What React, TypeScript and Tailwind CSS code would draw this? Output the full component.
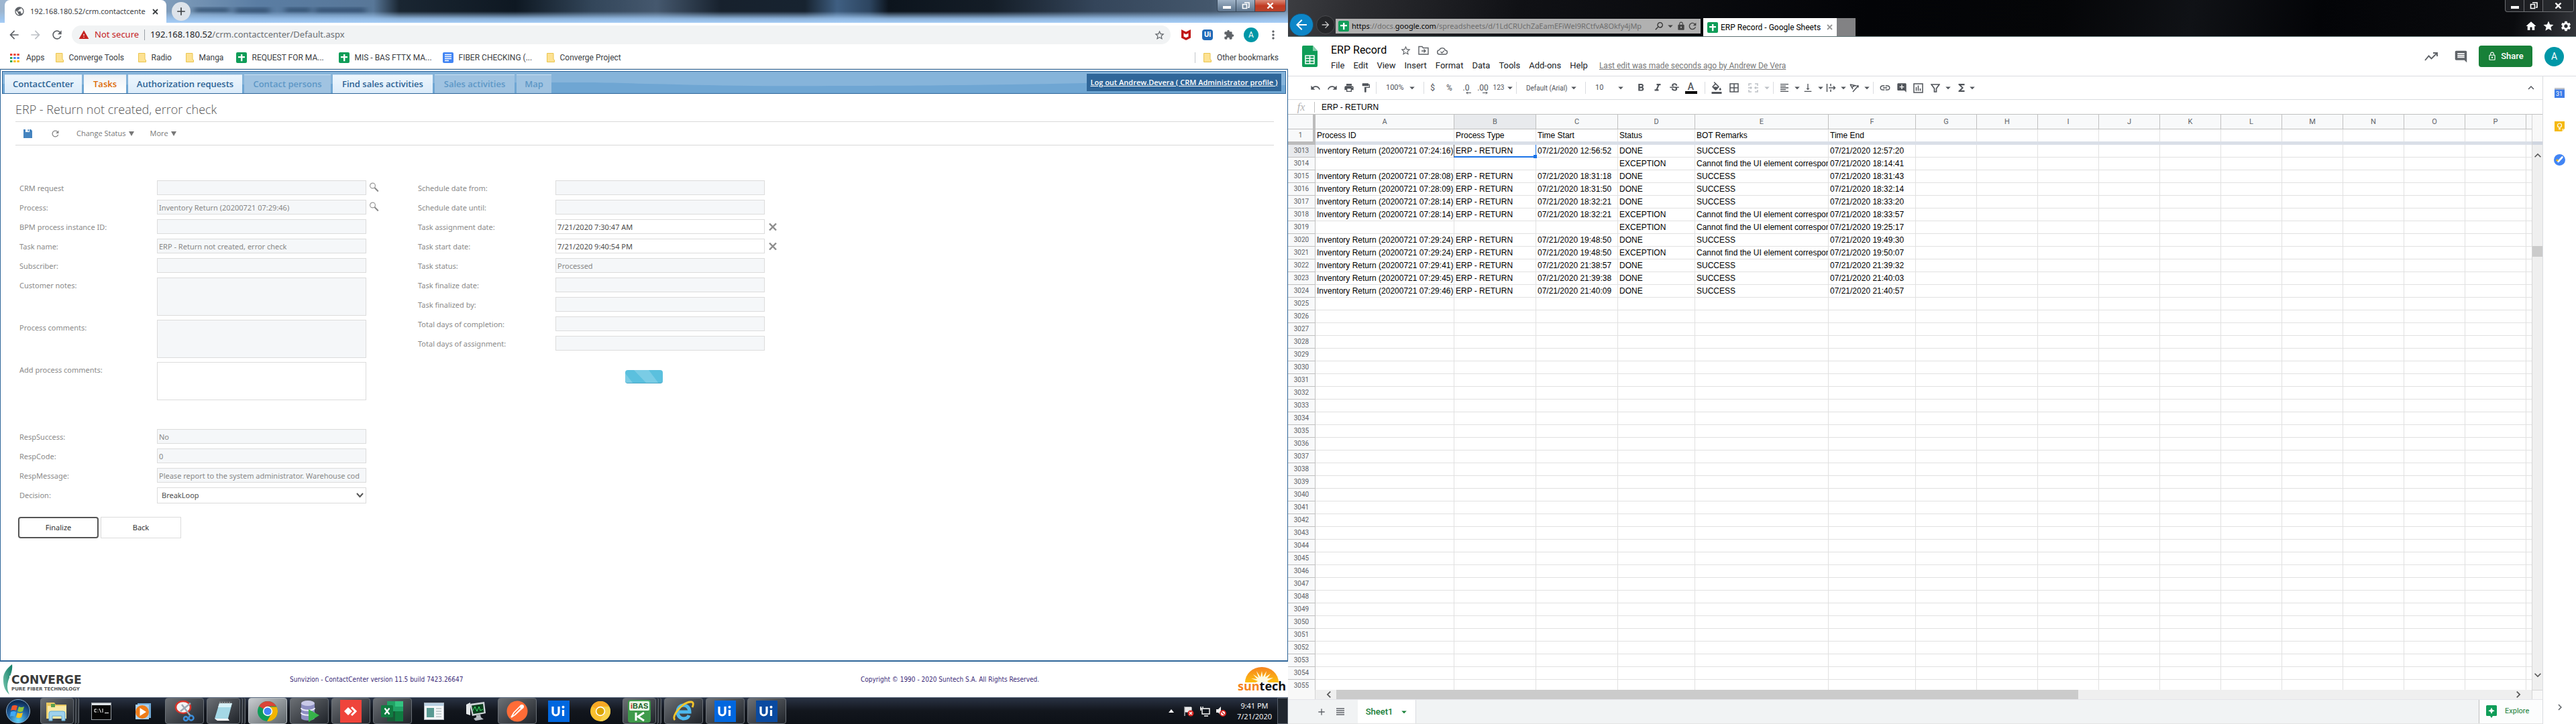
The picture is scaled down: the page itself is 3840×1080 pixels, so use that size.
import type { ReactNode } from "react";
import {
  MdAdd, MdAddComment, MdArrowBack, MdArrowDropDown, MdArrowForward, MdBorderAll, MdChevronRight,
  MdComment, MdExtension, MdFormatAlignLeft, MdFormatBold, MdFormatColorFill, MdFormatItalic, MdFormatPaint,
  MdFunctions, MdHome, MdInsertLink, MdKeyboardArrowDown, MdKeyboardArrowLeft, MdKeyboardArrowRight,
  MdKeyboardArrowUp, MdLock, MdLockOutline, MdMoreVert, MdPrint, MdPublic, MdRedo, MdRefresh, MdSearch,
  MdSettings, MdStar, MdStarBorder, MdStrikethroughS, MdUndo, MdVerticalAlignBottom, MdWarning,
} from "react-icons/md";

/* ---------- shared icons ---------- */

function SheetsFavicon() {
  return (
    <svg width="16" height="16" viewBox="0 0 16 16" className="shrink-0" aria-hidden="true">
      <rect width="16" height="16" rx="2" fill="#0f9d58" />
      <path d="M7 3h2.4v3H13v2.2H9.400v5H7v-5H3V6h4z" fill="#fff" />
    </svg>
  );
}

function DocsFavicon() {
  return (
    <svg width="16" height="16" viewBox="0 0 16 16" className="shrink-0" aria-hidden="true">
      <rect width="16" height="16" rx="2" fill="#4285f4" />
      <path d="M3 3.500h10M3 6.500h10M3 9.500h10M3 12.500h6" stroke="#fff" strokeWidth="1.500" />
    </svg>
  );
}

function Folder() {
  return (
    <svg width="12" height="14" viewBox="0 0 12 14" className="shrink-0" aria-hidden="true">
      <path d="M.5.5h9.500v9l1.500 1v3H.5z" fill="#fde293" stroke="#eac54f" />
    </svg>
  );
}

function Search() {
  return (
    <svg width="15" height="15" viewBox="0 0 15 15" aria-hidden="true">
      <circle cx="5.500" cy="5" r="3.900" fill="none" stroke="#999" strokeWidth="1.200" />
      <path d="M8.400 8l5.400 5.500" stroke="#888" strokeWidth="2" />
    </svg>
  );
}

function WindowButtons({ dark }: { dark?: boolean }) {
  const frame = dark ? "border-[#6c6e72] bg-[#1d1e22]" : "border-[#39495b] bg-gradient-to-b from-[#9fb2c6] to-[#5d748c]";
  const close = dark ? "bg-[#26282c]" : "bg-gradient-to-b from-[#d98a78] via-[#c23a22] to-[#b5432c]";
  return (
    <div className={`flex h-[18px] w-[103px] overflow-hidden rounded-b border border-t-0 ${frame}`}>
      <button aria-label="Minimize" className="flex w-7 items-end justify-center border-r border-inherit pb-1">
        <span className="h-1 w-3 bg-white" />
      </button>
      <button aria-label="Restore" className="flex w-7 items-center justify-center border-r border-inherit">
        <svg width="12" height="11" viewBox="0 0 12 11"><path d="M4 1h7v7H9M1.500 3.500h6v6h-6z" fill="none" stroke="#fff" strokeWidth="1.600" /></svg>
      </button>
      <button aria-label="Close" className={`flex flex-1 items-center justify-center ${close}`}>
        <svg width="11" height="9" viewBox="0 0 11 9"><path d="M1.500.5l8 8M9.500.5l-8 8" stroke="#fff" strokeWidth="2.400" /></svg>
      </button>
    </div>
  );
}

/* ---------- left: contact center ---------- */

const bookmarks: { label: string; icon: ReactNode; cls: string }[] = [
  { label: "Converge Tools", icon: <Folder />, cls: "w-[102px]" },
  { label: "Radio", icon: <Folder />, cls: "w-[50px]" },
  { label: "Manga", icon: <Folder />, cls: "w-[54px]" },
  { label: "REQUEST FOR MA...", icon: <SheetsFavicon />, cls: "w-[132px]" },
  { label: "MIS - BAS FTTX MA...", icon: <SheetsFavicon />, cls: "w-[134px]" },
  { label: "FIBER CHECKING (...", icon: <DocsFavicon />, cls: "w-[134px]" },
  { label: "Converge Project", icon: <Folder />, cls: "w-[120px]" },
];

function GlassTitle() {
  return (
    <svg className="absolute inset-0 h-full w-full" viewBox="0 0 1920 34" preserveAspectRatio="none" aria-hidden="true">
      <defs>
        <linearGradient id="glassX" x1="0" x2="1" y1="0" y2="0">
          <stop offset="0" stopColor="#9db6d0" />
          <stop offset=".13" stopColor="#7f9cba" />
          <stop offset=".2" stopColor="#5a7da3" />
          <stop offset=".29" stopColor="#587798" />
          <stop offset=".31" stopColor="#1a2632" />
          <stop offset=".4" stopColor="#0e1822" />
          <stop offset=".46" stopColor="#33465a" />
          <stop offset=".51" stopColor="#45586e" />
          <stop offset=".56" stopColor="#17212d" />
          <stop offset=".625" stopColor="#172330" />
          <stop offset=".65" stopColor="#3f5f82" />
          <stop offset=".675" stopColor="#2d4560" />
          <stop offset=".69" stopColor="#0c141d" />
          <stop offset=".77" stopColor="#141d27" />
          <stop offset=".85" stopColor="#34455a" />
          <stop offset=".94" stopColor="#44576c" />
          <stop offset="1" stopColor="#7992ab" />
        </linearGradient>
        <linearGradient id="glassY" x1="0" x2="0" y1="0" y2="1">
          <stop offset=".5" stopColor="#a3c9f0" stopOpacity="0" />
          <stop offset=".82" stopColor="#9cc4ee" stopOpacity=".9" />
          <stop offset="1" stopColor="#a6cdf6" />
        </linearGradient>
        <filter id="glassBlur"><feGaussianBlur stdDeviation="5 2" /></filter>
      </defs>
      <rect width="1920" height="34" fill="url(#glassX)" />
      <g fill="#33506f" opacity=".75" filter="url(#glassBlur)">
        <rect x="290" y="11" width="52" height="8" />
        <rect x="350" y="11" width="52" height="10" />
        <rect x="425" y="11" width="38" height="8" />
        <rect x="470" y="11" width="75" height="9" />
      </g>
      <rect width="1920" height="34" fill="url(#glassY)" />
    </svg>
  );
}

function ChromeBars() {
  return (
    <header className="font-[Roboto,sans-serif] text-xs text-[#3c4043]">
      <div className="relative flex h-[34px] items-start">
        <GlassTitle />
        <div className="relative ml-[7px] flex h-full w-[241px] items-center rounded-t-lg bg-white pl-3.5 pr-3">
          <MdPublic className="mr-2 size-4 shrink-0 text-[#5f6368]" />
          <span className="flex-1 whitespace-nowrap font-['Noto_Sans',sans-serif] text-[11px]">192.168.180.52/crm.contactcente</span>
          <button aria-label="Close tab" className="ml-2 text-[#3c4043]">
            <svg width="9" height="9" viewBox="0 0 9 9"><path d="M1 1l7 7M8 1L1 8" stroke="currentColor" strokeWidth="1.800" /></svg>
          </button>
        </div>
        <button aria-label="New tab" className="relative ml-2 mt-[3px] flex size-7 items-center justify-center rounded-full bg-[#dde3ea] text-[#3c4043]">
          <MdAdd className="size-5" />
        </button>
        <div className="relative ml-auto mr-[3px]"><WindowButtons /></div>
      </div>
      <div className="flex h-9 items-center bg-white pr-3">
        <button aria-label="Back" className="ml-[11px] text-[#5f6368]"><MdArrowBack className="size-5" /></button>
        <button aria-label="Forward" className="ml-3 text-[#bdc1c6]"><MdArrowForward className="size-5" /></button>
        <button aria-label="Reload" className="ml-3 text-[#5f6368]"><MdRefresh className="size-5" /></button>
        <div className="ml-3 flex h-7 flex-1 items-center rounded-full bg-[#f1f3f4] pl-2.5 pr-2 text-[13px]">
          <MdWarning className="size-4 text-[#c5221f]" />
          <span className="ml-2 font-['Noto_Sans',sans-serif] text-[#c5221f]">Not secure</span>
          <span className="mx-2 h-4 w-px bg-[#9aa0a6]" />
          <span className="font-['Noto_Sans',sans-serif] text-[#6b6f73]"><span className="text-[#202124]">192.168.180.52</span>/crm.contactcenter/Default.aspx</span>
          <button aria-label="Bookmark this page" className="ml-auto"><MdStarBorder className="size-[17px] text-[#5f6368]" /></button>
        </div>
        <button aria-label="McAfee" className="ml-4">
          <svg width="14" height="16" viewBox="0 0 14 16"><path d="M0 0l7 3.500L14 0v12.500L7 16l-7-3.500z" fill="#c01818" /><path d="M3.500 5.500L7 7.200l3.500-1.700v5L7 12.300l-3.500-1.800z" fill="#fff" /></svg>
        </button>
        <button aria-label="UiPath" className="ml-[17px] size-4 rounded-sm bg-[#1f6ab8] text-[11px] font-bold leading-4 text-white">Ui</button>
        <button aria-label="Extensions" className="ml-4 text-[#5f6368]"><MdExtension className="size-4" /></button>
        <button aria-label="Profile" className="ml-3.5 size-[22px] rounded-full bg-[#0097a7] text-xs text-white">A</button>
        <button aria-label="Menu" className="ml-3 text-[#5f6368]"><MdMoreVert className="size-5" /></button>
      </div>
      <nav className="flex h-[33px] items-center border-b border-[#d8dadd] bg-white pl-[15px] pr-3.5" aria-label="Bookmarks">
        <a href="#apps" className="flex items-center gap-2.5">
          <svg width="14" height="13" viewBox="0 0 14 13">
            {["#ea4335", "#ea4335", "#ea4335", "#34a853", "#4285f4", "#4285f4", "#34a853", "#fbbc04", "#fbbc04"].map((c, i) => (
              <rect key={i} x={(i % 3) * 5.2} y={Math.floor(i / 3) * 5} width="3.400" height="3" fill={c} />
            ))}
          </svg>
          Apps
        </a>
        <div className="ml-4 flex gap-[21px]">
          {bookmarks.map((b) => (
            <a key={b.label} href="#bookmark" className={`flex items-center gap-2 whitespace-nowrap ${b.cls}`}>{b.icon}{b.label}</a>
          ))}
        </div>
        <a href="#other" className="ml-auto flex h-4 items-center gap-2 border-l border-[#c4c7cb] pl-3"><Folder />Other bookmarks</a>
      </nav>
    </header>
  );
}

const navTabs: { label: string; kind: "on" | "active" | "off"; cls: string }[] = [
  { label: "ContactCenter", kind: "on", cls: "w-[115px]" },
  { label: "Tasks", kind: "active", cls: "w-[63px]" },
  { label: "Authorization requests", kind: "on", cls: "w-[170px]" },
  { label: "Contact persons", kind: "off", cls: "w-[129px]" },
  { label: "Find sales activities", kind: "on", cls: "w-[149px]" },
  { label: "Sales activities", kind: "off", cls: "w-[119px]" },
  { label: "Map", kind: "off", cls: "w-[52px]" },
];

const tabStyle = {
  on: "bg-gradient-to-b from-[#edf6fd] to-[#dcecfa] text-[#2c6394]",
  active: "bg-gradient-to-b from-[#eef3f7] to-white text-[#dd6a05]",
  off: "bg-[#a0c3e1] text-[#5d97c6]",
};

function AppNav() {
  return (
    <div className="relative flex h-[34px] items-end border border-[#2f6699] bg-[#6fa6d3]">
      <svg className="absolute inset-0 h-full w-full" viewBox="0 0 1914 32" preserveAspectRatio="none" aria-hidden="true">
        <path d="M0 0H1914V20C1800 22 1700 16 1660 16C1500 20 1350 21 1250 21C1130 22 1050 20 960 18C900 16 860 16 830 16C600 16 300 22 0 18z" fill="#86b4da" />
      </svg>
      <nav className="relative ml-[3px] flex items-end gap-[3px] font-['Open_Sans',sans-serif] text-[13px] font-semibold" aria-label="Modules">
        {navTabs.map((t) => (
          <a key={t.label} href="#module" className={`flex h-7 items-center justify-center whitespace-nowrap border-t border-[#c9dff1] ${t.cls} ${tabStyle[t.kind]}`}>{t.label}</a>
        ))}
      </nav>
      <a href="#logout" className="relative mb-[3px] ml-auto mr-1.5 flex h-[26px] w-[290px] items-center justify-center whitespace-nowrap bg-[#2f6699] font-['Open_Sans',sans-serif] text-[11px] font-semibold text-white underline">
        Log out Andrew.Devera ( CRM Administrator profile )
      </a>
    </div>
  );
}

type FieldSpec = { label: string; value?: string; editable?: boolean; area?: boolean; tool?: "search" | "clear" };

function Field({ f }: { f: FieldSpec }) {
  const id = f.label.toLowerCase().replace(/[^a-z]+/g, "-");
  const box = `w-[312px] border border-[#dcdcdc] px-0.5 ${f.editable ? "bg-white text-[#4d4d4d]" : "bg-[#f5f7f9] text-[#878787]"}`;
  return (
    <div className={`flex items-start ${f.area ? "h-[63px]" : "h-[29px]"}`}>
      <label htmlFor={id} className="w-[205px] leading-6">{f.label}</label>
      {f.area ? (
        <textarea id={id} readOnly={!f.editable} className={`${box} h-[57px] resize-none`} />
      ) : (
        <input id={id} readOnly={!f.editable} defaultValue={f.value} className={`${box} h-[22px]`} />
      )}
      {f.tool === "search" && <button aria-label={`Find ${f.label}`} className="ml-1 mt-[3px]"><Search /></button>}
      {f.tool === "clear" && (
        <button aria-label={`Clear ${f.label}`} className="ml-1.5 mt-1.5">
          <svg width="12" height="11" viewBox="0 0 12 11"><path d="M1 .5l10 10M11 .5L1 10.500" stroke="#8c8c8c" strokeWidth="2.400" /></svg>
        </button>
      )}
    </div>
  );
}

const leftFields: FieldSpec[] = [
  { label: "CRM request", tool: "search" },
  { label: "Process:", value: "Inventory Return (20200721 07:29:46)", tool: "search" },
  { label: "BPM process instance ID:" },
  { label: "Task name:", value: "ERP - Return not created, error check" },
  { label: "Subscriber:" },
  { label: "Customer notes:", area: true },
  { label: "Process comments:", area: true },
  { label: "Add process comments:", area: true, editable: true },
];

const responseFields: FieldSpec[] = [
  { label: "RespSuccess:", value: "No" },
  { label: "RespCode:", value: "0" },
  { label: "RespMessage:", value: "Please report to the system administrator. Warehouse cod" },
];

const rightFields: FieldSpec[] = [
  { label: "Schedule date from:" },
  { label: "Schedule date until:" },
  { label: "Task assignment date:", value: "7/21/2020 7:30:47 AM", editable: true, tool: "clear" },
  { label: "Task start date:", value: "7/21/2020 9:40:54 PM", editable: true, tool: "clear" },
  { label: "Task status:", value: "Processed" },
  { label: "Task finalize date:" },
  { label: "Task finalized by:" },
  { label: "Total days of completion:" },
  { label: "Total days of assignment:" },
];

function TaskForm() {
  return (
    <form className="flex pl-[26px] pt-[52px] font-['Noto_Sans',sans-serif] text-[11px] text-[#8a8a8a]">
      <div className="w-[594px]">
        {leftFields.map((f) => <Field key={f.label} f={f} />)}
        <div className="mt-[37px]">
          {responseFields.map((f) => <Field key={f.label} f={f} />)}
          <div className="flex h-11 items-start">
            <label htmlFor="decision" className="w-[205px] leading-6">Decision:</label>
            <div className="relative w-[312px]">
              <select id="decision" className="h-6 w-full appearance-none border border-[#dcdcdc] bg-white px-1.5 text-[#4d4d4d]" defaultValue="BreakLoop">
                <option>BreakLoop</option>
              </select>
              <svg className="pointer-events-none absolute right-1 top-2" width="11" height="8" viewBox="0 0 11 8"><path d="M1 1l4.500 5L10 1" fill="none" stroke="#555" strokeWidth="2" /></svg>
            </div>
          </div>
        </div>
        <div className="-ml-0.5 flex gap-[3px] text-[11px] text-[#333]">
          <button type="button" className="h-8 w-[120px] rounded-sm border-2 border-[#555]">Finalize</button>
          <button type="button" className="h-8 w-[120px] border border-[#dcdcdc]">Back</button>
        </div>
      </div>
      <div>
        {rightFields.map((f) => <Field key={f.label} f={f} />)}
        <div role="status" aria-label="Loading" className="ml-[309px] mt-[22px] h-5 w-14 overflow-hidden rounded-sm border-b border-[#4aa5c4] bg-[#5bc0de]">
          <svg width="56" height="20" viewBox="0 0 56 20" aria-hidden="true">
            <path d="M0 5L12 20H0zM13 0H35L50 20H32zM55 0h1v2z" fill="#7acce5" />
          </svg>
        </div>
      </div>
    </form>
  );
}

function ConvergeLogo() {
  return (
    <svg width="132" height="48" viewBox="0 0 132 48" role="img" aria-label="Converge Pure Fiber Technology">
      <defs><linearGradient id="leaf" x1="0" x2="1" y1="1" y2="0"><stop offset="0" stopColor="#7cc9b0" /><stop offset="1" stopColor="#0c7a63" /></linearGradient></defs>
      <path d="M14 1C5 8 0 16 1 25C1 34 4 41 10 46C6 38 6 30 10 21C13 14 15 8 14 1z" fill="url(#leaf)" />
      <path d="M10 18h8v22h-8z" fill="#fff" />
      <text x="13" y="30" fontFamily="DejaVu Sans" fontWeight="bold" fontSize="17" fill="#3a3a3a">CONVERGE</text>
      <text x="13" y="40" fontFamily="DejaVu Sans" fontWeight="bold" fontSize="7" fill="#555">PURE FIBER TECHNOLOGY</text>
    </svg>
  );
}

function SuntechLogo() {
  return (
    <svg width="76" height="40" viewBox="0 0 76 40" role="img" aria-label="suntech">
      <defs>
        <linearGradient id="sun" x1="0" x2="0" y1="0" y2="1"><stop offset="0" stopColor="#f6831f" /><stop offset="1" stopColor="#fdc010" /></linearGradient>
      </defs>
      <path d="M12 24a24 22 0 0 1 50 0z" fill="url(#sun)" />
      <path d="M37 7l1.500 9L44 7l-2 9 8-5-5 7 9-1-9 5 2 2H28l3-2-10-4 9 1-6-7 8 5-3-10 6 9z" fill="#fff9e0" />
      <text x="1" y="36" fontFamily="Open Sans" fontWeight="bold" fontSize="18" fill="#f58220">sun<tspan fill="#111">tech</tspan></text>
    </svg>
  );
}

/* ---------- taskbar ---------- */

function UiTile({ color }: { color: string }) {
  return (
    <svg width="32" height="32" viewBox="0 0 32 32" aria-hidden="true">
      <rect width="32" height="32" fill={color} />
      <path d="M7 9v8.500a4.500 4.500 0 0 0 9 0V9M22.500 14v9" fill="none" stroke="#fff" strokeWidth="3.200" />
      <circle cx="22.500" cy="9.800" r="2" fill="#fff" />
    </svg>
  );
}

function ChromeDisc({ a, b, c, core }: { a: string; b: string; c: string; core: string }) {
  return (
    <svg width="32" height="32" viewBox="0 0 32 32" aria-hidden="true">
      <circle cx="16" cy="16" r="15" fill={b} />
      <path d="M16 16L3 8.500A15 15 0 0 1 29 8.500H16z" fill={a} />
      <path d="M29.500 9.500A15 15 0 0 1 15 31l7.500-13L20 9.500z" fill={c} />
      <circle cx="16" cy="16" r="7.200" fill="#fff" />
      <circle cx="16" cy="16" r="5.600" fill={core} />
    </svg>
  );
}

const art: Record<string, ReactNode> = {
  explorer: (
    <svg width="34" height="32" viewBox="0 0 34 32">
      <path d="M1 3h12l2 3h16v21H1z" fill="#e9c75f" /><path d="M3 8h28v19H3z" fill="#fbe9a4" /><path d="M8 5h6v5H8z" fill="#5aa04e" />
      <path d="M5 30V19q0-3 3-3h18q3 0 3 3v11h-5v-7H10v7z" fill="#9fd2ee" stroke="#5fa9d3" />
    </svg>
  ),
  cmd: (
    <svg width="30" height="26" viewBox="0 0 30 26">
      <rect x=".5" y=".5" width="29" height="25" fill="#050505" stroke="#9aa0a6" /><path d="M1 1h28v3H1z" fill="#dfe3e8" />
      <path d="M8 10H5v4h3M10 10.500v1M10 13.500v1M12 9l2.500 6M17 9v6M20 15.500h6" stroke="#fff" fill="none" />
    </svg>
  ),
  player: (
    <svg width="28" height="28" viewBox="0 0 28 28">
      <path d="M6 2h20v22H6z" fill="#6fa9d8" /><path d="M3 4h20v22H3z" fill="#a8d1f0" /><circle cx="13" cy="15" r="10" fill="#ef7d1a" /><path d="M9.500 9v12L19 15z" fill="#fff" />
    </svg>
  ),
  snip: (
    <svg width="32" height="32" viewBox="0 0 32 32">
      <ellipse cx="14" cy="10" rx="11" ry="9" fill="#f4f4f4" stroke="#d8332a" strokeWidth="2.500" />
      <path d="M10 16L25 4M12 6l13 17" stroke="#9fa8b3" strokeWidth="2.500" /><circle cx="26" cy="26" r="3.500" fill="none" stroke="#3b8edb" strokeWidth="2.500" /><circle cx="18" cy="27" r="3" fill="none" stroke="#3b8edb" strokeWidth="2.500" />
    </svg>
  ),
  notepad: (
    <svg width="32" height="32" viewBox="0 0 32 32">
      <path d="M10 4h19l-6 23H3z" fill="#a4d8e6" /><path d="M10 4h19l-2 6H8z" fill="#d8f1f7" /><path d="M10 3h18" stroke="#888" strokeWidth="2.500" strokeDasharray="2 1.500" /><path d="M3 27l20 0 2 3H7z" fill="#fff" />
    </svg>
  ),
  chrome: <ChromeDisc a="#db4437" b="#0f9d58" c="#f4b400" core="#4285f4" />,
  db: (
    <svg width="34" height="34" viewBox="0 0 34 34">
      <path d="M5 5v22c0 5 20 5 20 0V5" fill="#8d8fc2" /><ellipse cx="15" cy="5" rx="10" ry="4" fill="#c9cae8" />
      <path d="M5 12c0 5 20 5 20 0M5 19c0 5 20 5 20 0" stroke="#e9e9f7" fill="none" strokeWidth="2" /><path d="M16 14l16 9-16 10z" fill="#37b34a" />
    </svg>
  ),
  anydesk: (
    <svg width="32" height="34" viewBox="0 0 32 34">
      <rect width="32" height="34" fill="#ef443b" /><path d="M12 11l6 6-6 6-6-6z" fill="#fff" /><path d="M17 11l6 6-6 6" fill="none" stroke="#fff" strokeWidth="3" />
    </svg>
  ),
  excel: (
    <svg width="34" height="32" viewBox="0 0 34 32">
      <path d="M9 1h24v30H9z" fill="#21a366" /><path d="M21 1h12v8H21z" fill="#33c481" /><path d="M9 16h12v15H9z" fill="#185c37" /><path d="M21 16h12v15H21z" fill="#107c41" /><rect y="7" width="18" height="18" rx="1.500" fill="#107c41" />
      <path d="M5.500 11.500l7 9M12.500 11.500l-7 9" stroke="#fff" strokeWidth="2.200" />
    </svg>
  ),
  app: (
    <svg width="30" height="26" viewBox="0 0 30 26">
      <rect x=".5" y=".5" width="29" height="25" fill="#f4f6f8" stroke="#a9b1ba" /><path d="M1 1h28v4H1z" fill="#b8cfe2" /><path d="M4 8h11v14H4z" fill="#5a9a93" /><path d="M18 9h8M18 13h8M18 17h8M18 21h8" stroke="#9aa" />
    </svg>
  ),
  monitor: (
    <svg width="32" height="32" viewBox="0 0 32 32">
      <path d="M2 6l6-3v19l-6-2z" fill="#e3e6e8" /><path d="M7 5l22-3 2 17-20 4z" fill="#cfd4d8" /><path d="M10 7.500l17-2.500 1.500 12.500L12.500 20z" fill="#0b3d1c" />
      <path d="M12 15l3-6 3 7 3-7 2 6 4-2" stroke="#3fe06b" fill="none" /><path d="M17 22l6-1 1 4 4 3-12 2-3-3 4-2z" fill="#b4bac0" />
    </svg>
  ),
  postman: (
    <svg width="32" height="32" viewBox="0 0 32 32">
      <circle cx="16" cy="16" r="15.500" fill="#ff6c37" /><path d="M7 25l4-7L21 8l3 3-11 10z" fill="none" stroke="#fff" strokeWidth="1.700" /><path d="M13 20l9-9" stroke="#fff" /><circle cx="23" cy="9" r="3" fill="#fff" />
    </svg>
  ),
  uiBlue: <UiTile color="#0067df" />,
  uiDark: <UiTile color="#0a4aa0" />,
  canary: <ChromeDisc a="#f9a825" b="#fbc02d" c="#f9d24b" core="#dba400" />,
  ibas: (
    <svg width="34" height="34" viewBox="0 0 34 34">
      <rect width="34" height="34" rx="4" fill="#3f9a4b" /><rect x="2" y="2" width="30" height="14" rx="2" fill="#e8f6e4" />
      <text x="4" y="13" fontFamily="Liberation Sans" fontWeight="bold" fontSize="11" fill="#1d5f2b"><tspan fill="#c92a2a">i</tspan>BAS</text>
      <path d="M12 19v12M24 19l-9 6 9 6" stroke="#fff" strokeWidth="3" fill="none" />
    </svg>
  ),
  ie: (
    <svg width="34" height="34" viewBox="0 0 34 34">
      <path d="M8 18h18c0-6-4-10-9-10s-9 4-9 10 4 10 9 10c4 0 7-2 8-5" fill="none" stroke="#4db8ee" strokeWidth="5" />
      <path d="M4 30C-2 24 16 3 28 3c4 0 4 4 2 8" fill="none" stroke="#f6c62c" strokeWidth="2.800" />
    </svg>
  ),
};

const taskItems: { name: string; icon: string; open?: boolean; bright?: boolean; stack?: boolean }[] = [
  { name: "File Explorer", icon: "explorer", open: true, stack: true },
  { name: "Command Prompt", icon: "cmd" },
  { name: "Media Player", icon: "player" },
  { name: "Snipping Tool", icon: "snip", open: true },
  { name: "Notepad", icon: "notepad", open: true, stack: true },
  { name: "Chrome", icon: "chrome", open: true, bright: true },
  { name: "SQL Client", icon: "db", open: true },
  { name: "AnyDesk", icon: "anydesk", open: true },
  { name: "Excel", icon: "excel", open: true },
  { name: "Window App", icon: "app" },
  { name: "Resource Monitor", icon: "monitor" },
  { name: "Postman", icon: "postman", open: true },
  { name: "UiPath Assistant", icon: "uiBlue" },
  { name: "Chrome Canary", icon: "canary" },
  { name: "iBAS", icon: "ibas", open: true, stack: true },
  { name: "Internet Explorer", icon: "ie", open: true },
  { name: "UiPath", icon: "uiBlue", open: true },
  { name: "UiPath Studio", icon: "uiDark", open: true },
];

function Taskbar() {
  return (
    <footer className="flex h-10 items-stretch border-t border-[#5d6b80] bg-gradient-to-b from-[#2a3344] via-[#12161d] to-[#0d1117] text-white">
      <button aria-label="Start" className="flex w-[60px] items-center pl-2">
        <svg width="38" height="38" viewBox="0 0 38 38">
          <defs><radialGradient id="orb" cx=".5" cy=".9" r=".8"><stop offset="0" stopColor="#5fd0f5" /><stop offset=".6" stopColor="#1f5f9f" /><stop offset="1" stopColor="#0d2d55" /></radialGradient></defs>
          <circle cx="19" cy="19" r="17.500" fill="url(#orb)" stroke="#8fb3d0" />
          <path d="M10 11q4-2 8 0l-2 7q-4-2-8 0z" fill="#f0562b" /><path d="M20 12q4 2 8 0l-2 7q-4 2-8 0z" fill="#8cc63f" />
          <path d="M8 20q4-2 8 0l-2 7q-4-2-7 0z" fill="#3fa9f5" /><path d="M18 21q4 2 8 0l-2 7q-4 2-8 0z" fill="#fcc21b" />
        </svg>
      </button>
      <div className="flex gap-1">
        {taskItems.map((t) => (
          <button key={t.name} aria-label={t.name} className="flex w-[58px] items-stretch gap-px">
            <span
              className={`flex flex-1 items-center justify-center rounded-sm border ${
                t.bright ? "border-[#b9bfc4] bg-gradient-to-br from-[#c9cdd0] to-[#5d6469]" : t.open ? "border-[#6a7077] bg-gradient-to-br from-[#6c7075] to-[#20242a]" : "border-transparent"
              }`}
            >
              {art[t.icon]}
            </span>
            {t.stack && <span className="w-[3px] rounded-r-sm border-r border-[#6a7077] bg-[#30353b]" />}
            {t.stack && <span className="w-[3px] rounded-r-sm border-r border-[#6a7077] bg-[#30353b]" />}
          </button>
        ))}
      </div>
      <div className="ml-auto flex items-center font-['Open_Sans',sans-serif] text-[11px]">
        <svg width="8" height="5" viewBox="0 0 8 5"><path d="M0 5l4-5 4 5z" fill="#fff" /></svg>
        <svg className="ml-3.5" width="16" height="16" viewBox="0 0 16 16"><path d="M2 1v14M3 2h9v7H3z" stroke="#fff" fill="#e8e8e8" /><circle cx="11" cy="11" r="4.500" fill="#d8231f" /><path d="M9 9l4 4M13 9l-4 4" stroke="#fff" strokeWidth="1.300" /></svg>
        <svg className="ml-2" width="16" height="16" viewBox="0 0 16 16"><path d="M4 4h11v8H4zM7 15h6M2 1v6M5 1v2M1 4h4" stroke="#fff" fill="none" strokeWidth="1.400" /></svg>
        <svg className="ml-2" width="16" height="16" viewBox="0 0 16 16"><path d="M1 5h3l4-4v13l-4-4H1z" fill="#eee" /><circle cx="11" cy="11" r="4" fill="#fff" stroke="#d8231f" strokeWidth="1.800" /><path d="M8.500 8.500l5 5" stroke="#d8231f" strokeWidth="1.500" /></svg>
        <div className="ml-4 text-center leading-4"><div>9:41 PM</div><div>7/21/2020</div></div>
        <span className="ml-2 h-full w-4 border border-[#59616c] bg-[#20262e]" />
      </div>
    </footer>
  );
}

function ContactCenter() {
  return (
    <section className="flex min-w-0 flex-col bg-white">
      <ChromeBars />
      <main className="flex flex-1 flex-col border border-b-2 border-[#2f6699] px-0.5 pt-0.5 font-['Open_Sans',sans-serif]">
        <AppNav />
        <div className="pl-5 pr-[18px]">
          <h1 className="flex h-[42px] items-center border-b border-[#d9d9d9] pt-1 text-lg font-light text-[#555]">ERP - Return not created, error check</h1>
          <div className="flex h-[35px] items-center border-b border-[#d9d9d9] pl-3 text-[11px] text-[#777]">
            <button aria-label="Save">
              <svg width="13" height="13" viewBox="0 0 13 13"><path d="M0 0h3v4h6V0h2l2 2v11H0z" fill="#4584bf" /><path d="M6.500 0H8v3H6.500z" fill="#4584bf" /></svg>
            </button>
            <button aria-label="Refresh" className="ml-[27px]"><MdRefresh className="size-[15px] text-[#888]" /></button>
            <button className="ml-6 flex items-center gap-1">Change Status <svg width="8" height="7" viewBox="0 0 8 7"><path d="M0 0h8L4 7z" fill="#777" /></svg></button>
            <button className="ml-6 flex items-center gap-1">More <svg width="8" height="7" viewBox="0 0 8 7"><path d="M0 0h8L4 7z" fill="#777" /></svg></button>
          </div>
        </div>
        <TaskForm />
      </main>
      <div className="flex h-[53px] items-center font-['DejaVu_Sans_Condensed','DejaVu_Sans',sans-serif] text-[10px] text-[#3b2a78]">
        <div className="w-[432px] pl-1"><ConvergeLogo /></div>
        <span className="w-[851px]">Sunvizion - ContactCenter version 11.5 build 7423.26647</span>
        <span>Copyright © 1990 - 2020 Suntech S.A. All Rights Reserved.</span>
        <div className="ml-auto"><SuntechLogo /></div>
      </div>
      <Taskbar />
    </section>
  );
}

/* ---------- right: spreadsheet ---------- */

function BrowserBar() {
  return (
    <header className="flex h-[55px] flex-col border-b border-[#5c7273] bg-[linear-gradient(100deg,#3c3d41_0%,#2c2d31_5%,#101115_18%,#030407_45%,#050608_60%,#101216_70%,#030407_80%,#0a0b0e_95%,#33353a_100%)]">
      <div className="mr-[3px] flex h-5 items-start justify-end"><WindowButtons dark /></div>
      <div className="flex flex-1 items-end">
        <button aria-label="Back" className="ml-0.5 flex h-[34px] w-9 items-center justify-center rounded-full border border-[#1c4f6e] bg-[#0d86c8] text-white"><MdArrowBack className="size-6" /></button>
        <button aria-label="Forward" className="mb-[3px] ml-1 flex size-7 items-center justify-center rounded-full border border-[#4a4b4e] bg-[#252629] text-[#c9c9c9]"><MdArrowForward className="size-4" /></button>
        <div className="mb-1 ml-px flex h-[22px] w-[544px] items-center bg-[#b1b1b1] pl-1 pr-1 text-[#6d6d6d]">
          <SheetsFavicon />
          <span className="ml-1 flex-1 whitespace-nowrap font-['Noto_Sans',sans-serif] text-[11px]"><span className="text-black">https</span>://docs.<span className="text-black">google.com</span>/spreadsheets/d/1LdCRUchZaEamEFiWel9RCtfvA8Okfy4jMp</span>
          <button aria-label="Search" className="text-[#333]"><MdSearch className="size-4 -scale-x-100" /></button>
          <button aria-label="Address history" className="text-[#444]"><MdArrowDropDown className="size-[18px]" /></button>
          <MdLock className="size-3.5 text-[#444]" />
          <button aria-label="Reload" className="ml-0.5 text-[#444]"><MdRefresh className="size-4" /></button>
        </div>
        <div className="ml-1 flex h-[27px] w-[199px] items-center bg-white px-1.5 font-[Roboto,sans-serif] text-xs text-black">
          <SheetsFavicon />
          <span className="ml-1 flex-1 whitespace-nowrap">ERP Record - Google Sheets</span>
          <button aria-label="Close tab"><svg width="9" height="9" viewBox="0 0 9 9"><path d="M1 1l7 7M8 1L1 8" stroke="#999" strokeWidth="1.800" /></svg></button>
        </div>
        <button aria-label="New tab" className="h-[27px] w-7 bg-[#828284]" />
        <div className="mb-1.5 ml-auto mr-1.5 flex gap-2 text-white">
          <button aria-label="Home"><MdHome className="size-[18px]" /></button>
          <button aria-label="Favorites"><MdStar className="size-[18px]" /></button>
          <button aria-label="Settings"><MdSettings className="size-[18px]" /></button>
        </div>
      </div>
    </header>
  );
}

const menus = ["File", "Edit", "View", "Insert", "Format", "Data", "Tools", "Add-ons", "Help"];

function SheetHeader() {
  return (
    <div className="flex h-[58px] items-start pl-[21px] pr-[18px] pt-[11px] font-[Roboto,sans-serif]">
      <svg width="23" height="34" viewBox="0 0 23 34" className="mt-0.5 shrink-0" aria-hidden="true">
        <path d="M2 0h14l7 8v22a2 2 0 0 1-2 2H2a2 2 0 0 1-2-2V2a2 2 0 0 1 2-2z" fill="#0f9d58" /><path d="M16 0l7 8h-7z" fill="#87ceac" />
        <path d="M5 15h13v12H5zM5 19h13M5 23h13M11.500 15v12" fill="none" stroke="#fff" strokeWidth="1.500" />
      </svg>
      <div className="ml-5">
        <div className="flex h-[18px] items-center text-base text-black">
          <h2>ERP Record</h2>
          <button aria-label="Star" className="ml-5 text-[#5f6368]"><MdStarBorder className="size-[17px]" /></button>
          <button aria-label="Move" className="ml-2.5">
            <svg width="16" height="14" viewBox="0 0 16 14"><path d="M1 1.500h5l1.500 2H15V13H1z" fill="none" stroke="#5f6368" strokeWidth="1.400" /><path d="M5 8h5.500M8.500 5.500L11 8l-2.500 2.500" fill="none" stroke="#5f6368" strokeWidth="1.400" /></svg>
          </button>
          <button aria-label="Saved to cloud" className="ml-3">
            <svg width="16" height="13" viewBox="0 0 16 13"><path d="M4 12a3.200 3.200 0 0 1-.3-6.400A4.500 4.500 0 0 1 12.300 6 3 3 0 0 1 12.500 12z" fill="none" stroke="#5f6368" strokeWidth="1.400" /><path d="M5.500 8l2 2 3.200-3.400" fill="none" stroke="#5f6368" strokeWidth="1.300" /></svg>
          </button>
        </div>
        <div className="mt-1 flex h-5 items-center gap-[13px] whitespace-nowrap text-[13px] text-[#202124]">
          {menus.map((m) => <button key={m}>{m}</button>)}
          <a href="#history" className="ml-1 text-xs text-[#777] underline">Last edit was made seconds ago by Andrew De Vera</a>
        </div>
      </div>
      <div className="ml-auto mt-0.5 flex h-8 items-center text-[#5f6368]">
        <button aria-label="Activity">
          <svg width="20" height="13" viewBox="0 0 20 13"><path d="M1 12l5.500-6.500 4 4L18 2M13 1h6v5" fill="none" stroke="currentColor" strokeWidth="1.900" /></svg>
        </button>
        <button aria-label="Comments" className="ml-6"><MdComment className="size-[21px]" /></button>
        <button className="ml-4 flex h-8 w-20 items-center justify-center gap-1.5 rounded bg-[#188038] text-[13px] font-medium text-white"><MdLockOutline className="size-3.5" />Share</button>
        <button aria-label="Account" className="ml-[18px] size-[29px] rounded-full bg-[#0097a7] text-sm text-white">A</button>
      </div>
    </div>
  );
}

function Tool({ label, children, cls = "w-[25px]" }: { label: string; children: ReactNode; cls?: string }) {
  return <button aria-label={label} className={`flex items-center justify-center ${cls}`}>{children}</button>;
}

const caret = <MdArrowDropDown className="-mx-1 size-[18px] shrink-0" />;

function SheetToolbar() {
  const g = "flex h-[18px] items-center border-r border-[#dadce0]";
  return (
    <div className="flex h-[35px] items-center border-b border-[#dadce0] pl-7 font-[Roboto,sans-serif] text-[10px] text-[#50545a]" role="toolbar">
      <div className={`${g} w-[104px]`}>
        <Tool label="Undo"><MdUndo className="size-4" /></Tool>
        <Tool label="Redo"><MdRedo className="size-4" /></Tool>
        <Tool label="Print"><MdPrint className="size-4" /></Tool>
        <Tool label="Paint format"><MdFormatPaint className="size-4" /></Tool>
      </div>
      <button className={`${g} w-[71px] justify-between pl-3.5 pr-3 text-[11px]`}>100%{caret}</button>
      <div className={`${g} w-[138px] text-xs`}>
        <Tool label="Currency">$</Tool>
        <Tool label="Percent">%</Tool>
        <Tool label="Decrease decimals"><span className="relative">.0<svg className="absolute -bottom-0.5 left-1" width="8" height="5" viewBox="0 0 8 5"><path d="M8 2.500H1M3 .5l-2 2 2 2" fill="none" stroke="currentColor" /></svg></span></Tool>
        <Tool label="Increase decimals"><span className="relative">.00<svg className="absolute -bottom-0.5 left-2" width="8" height="5" viewBox="0 0 8 5"><path d="M0 2.500h7M5 .5l2 2-2 2" fill="none" stroke="currentColor" /></svg></span></Tool>
        <button className="flex w-9 items-center justify-center gap-1 text-[10px]">123{caret}</button>
      </div>
      <button className={`${g} w-[103px] justify-between pl-3.5 pr-3`}>Default (Arial){caret}</button>
      <div className={`${g} w-[178px]`}>
        <button className="flex w-[69px] items-center justify-between pl-3.5 pr-3 text-[11px]">10{caret}</button>
        <Tool label="Bold"><MdFormatBold className="size-[18px]" /></Tool>
        <Tool label="Italic"><MdFormatItalic className="size-[18px]" /></Tool>
        <Tool label="Strikethrough"><MdStrikethroughS className="size-[18px]" /></Tool>
        <Tool label="Text color"><span className="flex h-[18px] w-[18px] flex-col items-center justify-between text-sm font-medium leading-[14px]">A<span className="h-1 w-[18px] shrink-0 bg-black" /></span></Tool>
      </div>
      <div className={`${g} w-[102px] pl-1`}>
        <Tool label="Fill color"><MdFormatColorFill className="size-[18px]" /></Tool>
        <Tool label="Borders" cls="w-7"><MdBorderAll className="size-[18px]" /></Tool>
        <Tool label="Merge cells" cls="w-7 text-[#bdc1c6]">
          <svg width="15" height="14" viewBox="0 0 15 14"><path d="M5 1H1v3M10 1h4v3M5 13H1v-3M10 13h4v-3M0 7h5M15 7h-5M3.500 5.500L5 7 3.500 8.500M11.500 5.500L10 7l1.500 1.500" fill="none" stroke="currentColor" strokeWidth="1.500" /></svg>
        </Tool>
        <Tool label="Merge options" cls="w-3.5 text-[#bdc1c6]">{caret}</Tool>
      </div>
      <div className={`${g} w-[149px] pl-1.5`}>
        <Tool label="Horizontal align" cls="w-[35px] gap-1.5"><MdFormatAlignLeft className="size-4" />{caret}</Tool>
        <Tool label="Vertical align" cls="w-[35px] gap-1.5"><MdVerticalAlignBottom className="size-4" />{caret}</Tool>
        <Tool label="Text wrapping" cls="w-[35px] gap-1.5">
          <svg width="15" height="14" viewBox="0 0 15 14"><path d="M1.500 1v12M7 1v3.500M7 9.500V13M4 7h9M11 4.500L13.500 7 11 9.500" fill="none" stroke="currentColor" strokeWidth="1.500" /></svg>{caret}
        </Tool>
        <Tool label="Text rotation" cls="w-[35px] gap-1.5">
          <svg width="15" height="14" viewBox="0 0 15 14"><path d="M1 2l9 2M1 2l4 7M4 6l4-2.500M5 13l8-9M10.500 4H13v2.500" fill="none" stroke="currentColor" strokeWidth="1.500" /></svg>{caret}
        </Tool>
      </div>
      <div className="flex h-[18px] items-center pl-1">
        <Tool label="Insert link"><MdInsertLink className="size-[18px]" /></Tool>
        <Tool label="Insert comment"><MdAddComment className="size-4" /></Tool>
        <Tool label="Insert chart">
          <svg width="15" height="15" viewBox="0 0 15 15"><path d="M1 1h13v13H1zM4.500 6v5.500M7.500 3.500v8M10.500 8v3.500" fill="none" stroke="currentColor" strokeWidth="1.500" /></svg>
        </Tool>
        <Tool label="Filter">
          <svg width="14" height="13" viewBox="0 0 14 13"><path d="M1 1h12L8.500 7v5h-3V7z" fill="none" stroke="currentColor" strokeWidth="1.700" /></svg>
        </Tool>
        <Tool label="Filter views" cls="w-3.5">{caret}</Tool>
        <Tool label="Functions"><MdFunctions className="size-[18px]" /></Tool>
        <Tool label="Function list" cls="w-2">{caret}</Tool>
      </div>
      <button aria-label="Hide the menus" className="ml-auto mr-2"><MdKeyboardArrowUp className="size-[18px]" /></button>
    </div>
  );
}

const P = "Inventory Return (20200721 07:";
const R = "ERP - RETURN";
const X = "Cannot find the UI element correspon";
const D = "07/21/2020 ";
const data: string[][] = [
  [P + "24:16)", R, D + "12:56:52", "DONE", "SUCCESS", D + "12:57:20"],
  ["", "", "", "EXCEPTION", X, D + "18:14:41"],
  [P + "28:08)", R, D + "18:31:18", "DONE", "SUCCESS", D + "18:31:43"],
  [P + "28:09)", R, D + "18:31:50", "DONE", "SUCCESS", D + "18:32:14"],
  [P + "28:14)", R, D + "18:32:21", "DONE", "SUCCESS", D + "18:33:20"],
  [P + "28:14)", R, D + "18:32:21", "EXCEPTION", X, D + "18:33:57"],
  ["", "", "", "EXCEPTION", X, D + "19:25:17"],
  [P + "29:24)", R, D + "19:48:50", "DONE", "SUCCESS", D + "19:49:30"],
  [P + "29:24)", R, D + "19:48:50", "EXCEPTION", X, D + "19:50:07"],
  [P + "29:41)", R, D + "21:38:57", "DONE", "SUCCESS", D + "21:39:32"],
  [P + "29:45)", R, D + "21:39:38", "DONE", "SUCCESS", D + "21:40:03"],
  [P + "29:46)", R, D + "21:40:09", "DONE", "SUCCESS", D + "21:40:57"],
];
const columns = "ABCDEFGHIJKLMNOP".split("");
const titles = ["Process ID", "Process Type", "Time Start", "Status", "BOT Remarks", "Time End"];
const colWidths = ["w-[207px]", "w-[122px]", "w-[122px]", "w-[115px]", "w-[199px]", "w-[130px]"];
const rowNumbers = Array.from({ length: 43 }, (_, i) => 3013 + i);

function Grid() {
  const cell = "overflow-hidden whitespace-nowrap border-r border-[#e1e1e1] p-0 pl-0.5";
  return (
    <table className="w-full table-fixed border-separate border-spacing-0 font-['Liberation_Sans',sans-serif] text-xs leading-[18px] text-black">
      <colgroup>
        <col className="w-[41px]" />
        {columns.map((c, i) => <col key={c} className={i < 6 ? colWidths[i] : "w-[91px]"} />)}
        <col />
      </colgroup>
      <thead className="font-[Roboto,sans-serif] text-[11px] text-[#5f6368]">
        <tr className="h-[22px]">
          <th className="border-b border-r-4 border-[#c0c0c0] border-r-[#bcbcbc] bg-[#f8f9fa] p-0" aria-label="Row" />
          {columns.map((c) => (
            <th key={c} scope="col" className={`border-b border-r border-[#c0c0c0] p-0 font-normal ${c === "B" ? "bg-[#e8eaed]" : "bg-[#f8f9fa]"}`}>{c}</th>
          ))}
          <td className="border-b border-[#c0c0c0] bg-[#f8f9fa] p-0" />
        </tr>
      </thead>
      <tbody>
        <tr className="h-[18px]">
          <th scope="row" className="border-r-4 border-[#bcbcbc] bg-[#f8f9fa] p-0 font-[Roboto,sans-serif] text-[10px] font-normal text-[#5f6368]">1</th>
          {columns.map((c, i) => <td key={c} className={cell}>{titles[i]}</td>)}
          <td className="p-0" />
        </tr>
        <tr className="h-[5px]">
          <td className="h-[5px] bg-[#bcbcbc] p-0" />
          <td colSpan={17} className="h-[5px] bg-[#dadfe8] p-0" />
        </tr>
        {rowNumbers.map((n, r) => (
          <tr key={n} className="h-[19px]">
            <th scope="row" className={`border-b border-r border-[#c0c0c0] p-0 font-[Roboto,sans-serif] text-[10px] font-normal text-[#5f6368] ${r === 0 ? "bg-[#e8eaed]" : "bg-[#f8f9fa]"}`}>{n}</th>
            {columns.map((c, i) =>
              r === 0 && i === 1 ? (
                <td key={c} className="relative whitespace-nowrap border-b border-r border-[#e1e1e1] p-0 pl-0.5">
                  {data[0][1]}
                  <span className="absolute -bottom-px -left-px -right-px top-0 border-b-2 border-l border-r border-[#1a73e8] border-l-[#555]" />
                  <span className="absolute -bottom-0.5 -right-0.5 size-[5px] bg-[#1a73e8]" />
                </td>
              ) : (
                <td key={c} className={`${cell} border-b`}>{data[r]?.[i]}</td>
              ),
            )}
            <td className="border-b border-[#e1e1e1] p-0" />
          </tr>
        ))}
      </tbody>
    </table>
  );
}

function SidePanel() {
  return (
    <aside className="flex w-[50px] shrink-0 flex-col items-center border-l border-[#dadce0] pt-[17px]">
      <button aria-label="Calendar">
        <svg width="15" height="15" viewBox="0 0 15 15"><path d="M0 0h15v4H0z" fill="#c3c6cb" /><path d="M0 2.500h15V15H0z" fill="#3f7de8" /><text x="2" y="12" fontFamily="Roboto" fontSize="9" fill="#fff">31</text></svg>
      </button>
      <button aria-label="Keep" className="mt-[35px]">
        <svg width="15" height="15" viewBox="0 0 15 15"><path d="M0 0h15v11l-4 4H0z" fill="#f5b912" /><path d="M15 11l-4 4v-4z" fill="#fde08a" /><circle cx="7.500" cy="6" r="3" fill="none" stroke="#fff" strokeWidth="1.200" /><path d="M6 10.500h3M6 12h3" stroke="#fff" /></svg>
      </button>
      <button aria-label="Tasks" className="mt-[34px]">
        <svg width="17" height="17" viewBox="0 0 17 17"><circle cx="8.500" cy="8.500" r="8.500" fill="#4285f4" /><path d="M6.500 11l6-6.500" stroke="#fff" strokeWidth="2.600" strokeLinecap="round" /><circle cx="5" cy="9" r="1.600" fill="#fbbc04" /></svg>
      </button>
      <button aria-label="Hide side panel" className="mb-4 mt-auto text-[#5f6368]"><MdChevronRight className="size-[18px]" /></button>
    </aside>
  );
}

function Spreadsheet() {
  return (
    <section className="flex min-h-0 min-w-0 flex-col bg-white">
      <BrowserBar />
      <SheetHeader />
      <div className="flex min-h-0 flex-1 border-t border-[#dadce0]">
        <div className="flex min-w-0 flex-1 flex-col">
          <SheetToolbar />
          <div className="flex h-[22px] items-center border-b border-[#c0c0c0] text-xs">
            <label htmlFor="formula" className="w-10 border-r border-[#c0c0c0] text-center font-['Liberation_Serif',serif] text-base italic leading-4 text-[#b5b5b5]">fx</label>
            <input id="formula" defaultValue="ERP - RETURN" className="flex-1 bg-transparent pl-2.5 font-['Liberation_Sans',sans-serif] text-xs text-black outline-none" />
          </div>
          <div className="flex min-h-0 flex-1">
            <div className="min-w-0 flex-1 overflow-hidden"><Grid /></div>
            <div className="flex w-4 shrink-0 flex-col items-center border-l border-[#d5d5d5] bg-[#efefef] text-[#555]">
              <div className="h-10 w-full shrink-0 bg-[#f8f8f8]" />
              <div className="h-[5px] w-full shrink-0 bg-[#d0d6e0]" />
              <button aria-label="Scroll up" className="mt-1.5"><MdKeyboardArrowUp className="size-5" /></button>
              <div className="mt-[125px] h-4 w-full shrink-0 bg-[#cbcbcb]" />
              <button aria-label="Scroll down" className="mb-3 mt-auto"><MdKeyboardArrowDown className="size-5" /></button>
            </div>
          </div>
          <div className="flex h-[15px] items-stretch border-b border-[#e4e4ea]">
            <div className="w-[41px] border-r border-[#d5d5d5] bg-[#f8f8f8]" />
            <div className="flex flex-1 items-center bg-[#efefef] text-[#555]">
              <button aria-label="Scroll left" className="flex w-[31px] justify-center pl-2"><MdKeyboardArrowLeft className="size-5" /></button>
              <div className="h-[14px] w-[61%] bg-[#cbcbcb]" />
              <button aria-label="Scroll right" className="ml-auto mr-2.5"><MdKeyboardArrowRight className="size-5" /></button>
            </div>
            <div className="w-4 border-l border-t border-[#d5d5d5] bg-[#f8f8f8]" />
          </div>
          <div className="flex h-9 items-stretch border-b border-[#e4e4e4] bg-[#f1f3f4] font-[Roboto,sans-serif]">
            <button aria-label="Add sheet" className="ml-[41px] flex w-[18px] items-center justify-center text-[#5f6368]"><MdAdd className="size-4" /></button>
            <button aria-label="All sheets" className="ml-[13px] text-[#5f6368]">
              <svg width="12" height="11" viewBox="0 0 12 11"><path d="M0 1h12M0 4h12M0 7h12M0 10h12" stroke="currentColor" strokeWidth="1.600" /></svg>
            </button>
            <button className="ml-5 flex w-[87px] items-center justify-center gap-3 border-r border-[#dadce0] bg-white text-[13px] font-medium text-[#188038]">Sheet1{caret}</button>
            <button className="ml-auto flex w-[95px] items-center gap-3 border-l border-[#c0c0c0] bg-[#fcfdfd] pl-2.5 text-[11px] text-[#188038]">
              <svg width="16" height="19" viewBox="0 0 16 19"><path d="M1.500 0h13A1.500 1.500 0 0 1 16 1.500v13a1.500 1.500 0 0 1-1.500 1.500H10l-2 3-2-3H1.500A1.500 1.500 0 0 1 0 14.500v-13A1.500 1.500 0 0 1 1.500 0z" fill="#0f9d58" /><path d="M8 3.500l1.500 3.300 3.300 1.500-3.300 1.500L8 13.100 6.500 9.800 3.200 8.300l3.300-1.500z" fill="#fff" /></svg>
              Explore
            </button>
          </div>
        </div>
        <SidePanel />
      </div>
    </section>
  );
}

export default function App() {
  return (
    <div className="grid h-screen grid-cols-2 overflow-hidden">
      <ContactCenter />
      <Spreadsheet />
    </div>
  );
}
